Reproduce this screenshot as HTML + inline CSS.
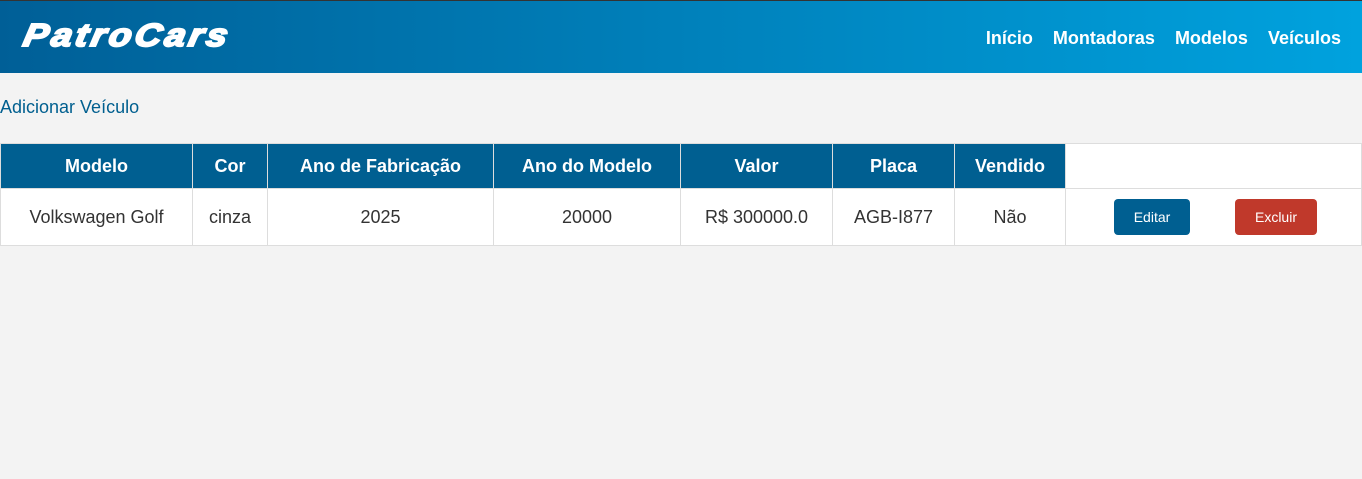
<!DOCTYPE html>
<html><head><style>
body{margin:0;background:#f3f3f3;font-family:"Liberation Sans",sans-serif;width:1362px;height:479px;overflow:hidden}
.hd{height:72px;border-top:1px solid #333;background:linear-gradient(90deg,#005f97,#00a2de);position:relative}
.logo{position:absolute;left:24px;top:16px;color:#fff;font-size:32px;font-weight:bold;font-style:italic;letter-spacing:3px;-webkit-text-stroke:2px #fff;transform:scaleX(1.15) skewX(-10deg);transform-origin:left center}
.nav{position:absolute;right:21px;top:27px;color:#fff;font-weight:bold;font-size:18px}
.nav span{margin-left:20px}
a.add{position:absolute;left:0;top:97px;color:#005f8f;font-size:18px;text-decoration:none}
table{position:absolute;top:143px;left:0;width:1362px;border-collapse:collapse;font-size:18px}
th{background:#005f91;color:#fff;height:44px;border:1px solid #ddd;padding:0}
th.w{background:#fff}
td{background:#fff;height:56px;border:1px solid #ddd;text-align:center;color:#333;padding:0}
.b{display:inline-block;color:#fff;font-size:14px;border-radius:4px;height:36px;line-height:36px}
</style></head><body>
<div class="hd"><div class="logo">PatroCars</div>
<div class="nav"><span>Início</span><span>Montadoras</span><span>Modelos</span><span>Veículos</span></div></div>
<a class="add">Adicionar Veículo</a>
<table><tr><th style="width:191px">Modelo</th><th style="width:74px">Cor</th><th style="width:225px">Ano de Fabricação</th><th style="width:186px">Ano do Modelo</th><th style="width:151px">Valor</th><th style="width:121px">Placa</th><th style="width:110px">Vendido</th><th class="w"></th></tr>
<tr><td>Volkswagen Golf</td><td>cinza</td><td>2025</td><td>20000</td><td>R$ 300000.0</td><td>AGB-I877</td><td>Não</td><td style="text-align:left"><span class="b" style="background:#005f91;width:76px;margin-left:48px;text-align:center">Editar</span><span class="b" style="background:#c0392b;width:82px;margin-left:45px;text-align:center">Excluir</span></td></tr></table>
</body></html>
